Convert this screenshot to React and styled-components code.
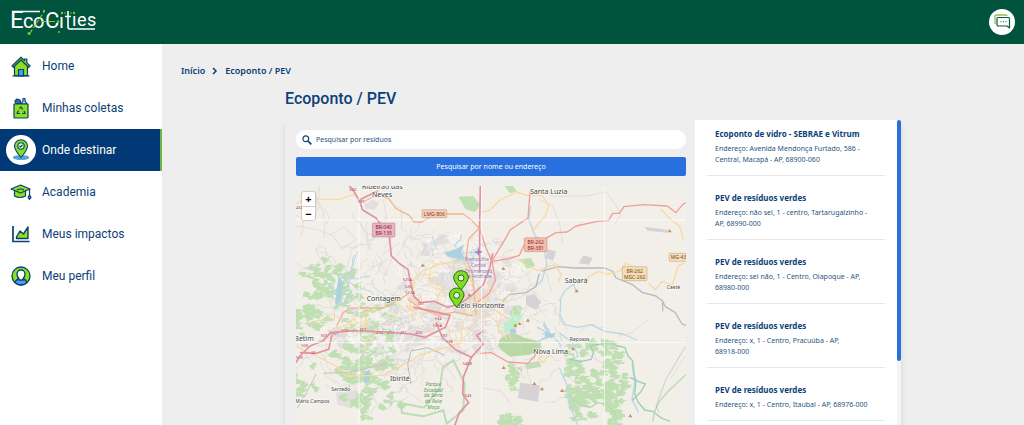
import React from 'react'
import styled, { createGlobalStyle } from 'styled-components'

const places = [
  { name: 'Ecoponto de vidro - SEBRAE e Vitrum', address: 'Avenida Mendonça Furtado, 586 - Central, Macapá - AP,', zip: '68900-060' },
  { name: 'PEV de resíduos verdes', address: 'não sei, 1 - centro, Tartarugalzinho - AP,', zip: '68990-000' },
  { name: 'PEV de resíduos verdes', address: 'sei não, 1 - Centro, Oiapoque - AP,', zip: '68980-000' },
  { name: 'PEV de resíduos verdes', address: 'x, 1 - Centro, Pracuúba - AP,', zip: '68918-000' },
  { name: 'PEV de resíduos verdes', address: 'x, 1 - Centro, Itaubal - AP,', zip: '68976-000' },
]

const menu = [
  { label: 'Home', icon: HomeIcon },
  { label: 'Minhas coletas', icon: BagIcon },
  { label: 'Onde destinar', icon: PlaceIcon, active: true },
  { label: 'Academia', icon: CapIcon },
  { label: 'Meus impactos', icon: ChartIcon },
  { label: 'Meu perfil', icon: ProfileIcon },
]

function App() {
  return (
    <Page>
      <GlobalStyle />
      <Header>
        <Logo />
        <ChatButton aria-label="Chat">
          <ChatIcon />
        </ChatButton>
      </Header>
      <Body>
        <Sidebar>
          {menu.map(({ label, icon: Icon, active }) => (
            <MenuLink href="#" key={label} $active={active}>
              <MenuIcon $active={active}><Icon /></MenuIcon>
              <span>{label}</span>
            </MenuLink>
          ))}
        </Sidebar>
        <Main>
          <Breadcrumb>
            <a href="#">Início</a>
            <svg width="6" height="8" viewBox="0 0 6 8" fill="none" stroke="#0b4078" strokeWidth="1.5">
              <path d="M1 1l3 3-3 3" />
            </svg>
            <a href="#">Ecoponto / PEV</a>
          </Breadcrumb>
          <Content>
            <Title>Ecoponto / PEV</Title>
            <Panel>
              <MapColumn>
                <SearchBox>
                  <svg width="10" height="10" viewBox="0 0 10 10" fill="none" stroke="#0b4078">
                    <circle cx="3.8" cy="3.8" r="2.9" strokeWidth="1.2" />
                    <path d="M6 6l3.3 3.3" strokeWidth="1.7" />
                  </svg>
                  <SearchInput aria-label="Pesquisar por resíduos" placeholder="Pesquisar por resíduos" />
                </SearchBox>
                <SearchButton>Pesquisar por nome ou endereço</SearchButton>
                <MapFrame>
                  <CityMap />
                  <ZoomControl>
                    <ZoomButton aria-label="Aproximar">+</ZoomButton>
                    <ZoomButton aria-label="Afastar">−</ZoomButton>
                  </ZoomControl>
                </MapFrame>
              </MapColumn>
              <PlaceList>
                {places.map((place) => (
                  <Place key={place.zip}>
                    <h2>{place.name}</h2>
                    <p>{`Endereço: ${place.address} `}<Zip>{place.zip}</Zip></p>
                  </Place>
                ))}
              </PlaceList>
              <ScrollTrack><ScrollThumb /></ScrollTrack>
            </Panel>
          </Content>
        </Main>
      </Body>
    </Page>
  )
}

export default App

function Logo() {
  return (
    <svg width="86" height="32" viewBox="0 -2 86 32" role="img" aria-label="EcoCities">
      <g fill="#fff" fontFamily="Roboto, sans-serif">
        <text x="-1" y="20" fontSize="24">E</text>
        <text x="12" y="20" fontSize="20">c</text>
        <text x="22" y="20" fontSize="20">o</text>
        <text x="34" y="20" fontSize="22">C</text>
        <text x="48" y="20" fontSize="20">ı</text>
        <text x="61" y="18" fontSize="18">ı</text>
        <text x="66" y="18" fontSize="18">e</text>
        <text x="76" y="18" fontSize="18">s</text>
      </g>
      <g fill="none" stroke="#fff" strokeWidth="1.6">
        <path d="M1 3.500h28M57 3v16q0 2 2 2h25M54 8.500h6" />
      </g>
      <g stroke="#7ccb2c" strokeWidth="1.2" fill="none">
        <path d="M19 25L33 4" strokeDasharray="4 2" />
        <path d="M30 13.500h16" strokeDasharray="6 2" />
      </g>
      <g fill="#7ccb2c">
        <circle cx="18" cy="25.500" r="1.500" />
        <circle cx="33" cy="3" r="1.200" />
        <circle cx="48" cy="24" r="1" />
        <circle cx="51" cy="5" r="1.200" />
        <circle cx="54" cy="5" r="0.800" />
        <circle cx="60" cy="5" r="0.800" />
        <circle cx="63" cy="5" r="1.200" />
        <circle cx="47" cy="13.500" r="1.200" />
      </g>
    </svg>
  )
}

function ChatIcon() {
  return (
    <svg width="18" height="16" viewBox="0 0 18 16" fill="none" strokeLinejoin="round">
      <path d="M2 10V2q0-1 1-1h10q1 0 1 1" stroke="#8cc152" strokeWidth="1.3" />
      <path d="M5 3.5h10.500q1 0 1 1V14l-2.500-2H5q-1 0-1-1V4.500q0-1 1-1z" fill="#fff" stroke="#0a5c45" strokeWidth="1.2" />
      <path d="M7.500 7.700h1M10 7.700h1M12.500 7.700h1" stroke="#0a5c45" />
    </svg>
  )
}

function HomeIcon() {
  return (
    <svg width="20" height="21" viewBox="0 0 20 21" stroke="#0b3f70" strokeWidth="1.2" strokeLinejoin="round">
      <path d="M3.500 9v10.500h13V9L10 3z" fill="#8be01e" />
      <path d="M1 10L10 1.200l3.500 3.300V3h2.300v3.700L19 10l-1.300 1.300L10 4l-7.700 7.300z" fill="#8be01e" />
      <path d="M7.500 20v-6.500h5V20z" fill="#3ba4f5" />
      <path d="M1.500 20h17" />
    </svg>
  )
}

function BagIcon() {
  return (
    <svg width="16" height="22" viewBox="0 0 16 22" stroke="#0b3f70" strokeWidth="1.2" strokeLinejoin="round">
      <path d="M3 7L2 4l2-2 3 1 1 4z" fill="#2f6eb5" />
      <path d="M8 7l2-3V1.500h2V4l2 3z" fill="#bcdcf5" />
      <path d="M1 7h14v13q0 1-1 1H2q-1 0-1-1z" fill="#8be01e" />
      <path d="M6.500 11.500L8 10l1.700 2.500M11 14l1 2.500H9M7 16.500H4l1.500-3" fill="none" />
    </svg>
  )
}

function PlaceIcon() {
  return (
    <svg width="18" height="22" viewBox="0 0 18 22" stroke="#0b3f70" strokeWidth="1.1">
      <ellipse cx="9" cy="18.500" rx="7.500" ry="1.800" fill="#4ea6ee" stroke="#4a90cc" />
      <path d="M9 18.500Q2.500 11 2.500 7a6.500 6.300 0 0 1 13 0Q15.500 11 9 18.500z" fill="#83df22" />
      <circle cx="9" cy="7" r="3.200" fill="#d9f4c6" />
      <path d="M7.500 7l1 1 2-2" fill="none" />
    </svg>
  )
}

function CapIcon() {
  return (
    <svg width="22" height="17" viewBox="0 0 22 17" stroke="#0b3f70" strokeWidth="1.2" strokeLinejoin="round">
      <path d="M4.500 6v6q5.500 3 11 0V6z" fill="#8be01e" />
      <path d="M1 5l9.500-4L20 5l-9.500 4z" fill="#8be01e" />
      <path d="M7 6q3.500-2 7 0" fill="none" />
      <path d="M19.500 5v6" />
      <path d="M19.500 11l1.500 2.500-1.500 2-1.500-2z" fill="#5c9fe0" />
    </svg>
  )
}

function ChartIcon() {
  return (
    <svg width="18" height="18" viewBox="0 0 18 18" stroke="#0b3f70" strokeWidth="1.4" strokeLinejoin="round">
      <path d="M4.500 13.500V12L8 6l3.500 3L16 2v11.500z" fill="#8be01e" />
      <path d="M1 1v15.500h16.500" fill="none" strokeWidth="1.700" />
    </svg>
  )
}

function ProfileIcon() {
  return (
    <svg width="20" height="20" viewBox="0 0 20 20" stroke="#0b3f70" strokeWidth="1.3">
      <circle cx="10" cy="10" r="9" fill="#8be01e" />
      <path d="M4 16.500q1.500-4 6-4t6 4q-2.500 2.500-6 2.500t-6-2.500z" fill="#4b9df0" />
      <path d="M8 12.500v1.500h4v-1.500q2-1.500 2-4.500a4 4 0 0 0-8 0q0 3 2 4.500z" fill="#fff" />
    </svg>
  )
}

// small repeatable generator, so the side streets stay the same between renders
function seeded(seed) {
  let s = seed
  return () => {
    s = (s * 16807) % 2147483647
    return s / 2147483647
  }
}

function streets(seed, count, cx, cy, rx, ry, step) {
  const rnd = seeded(seed)
  let d = ''
  for (let i = 0; i < count; i++) {
    const a = rnd() * 6.28
    const r = Math.sqrt(rnd())
    d += `M${Math.round(cx + Math.cos(a) * r * rx)} ${Math.round(cy + Math.sin(a) * r * ry)}`
    const turn = rnd() * 6.28
    for (let j = 0; j < 5; j++) {
      const t = turn + (rnd() - 0.5) * 1.6
      d += `l${Math.round(Math.cos(t) * step)} ${Math.round(Math.sin(t) * step)}`
    }
  }
  return d
}

function woods(seed, count, cx, cy, rx, ry, size) {
  const rnd = seeded(seed)
  let d = ''
  for (let i = 0; i < count; i++) {
    const x = cx + (rnd() + rnd() - 1) * rx
    const y = cy + (rnd() + rnd() - 1) * ry
    d += `M${Math.round(x)} ${Math.round(y)}`
    for (let j = 0; j < 9; j++) {
      const a = (j / 9) * 6.28
      const r = size * (0.3 + rnd())
      d += `L${Math.round(x + Math.cos(a) * r)} ${Math.round(y + Math.sin(a) * r * 0.7)}`
    }
    d += 'Z'
  }
  return d
}

const towns = [
  ['Ribeirão das', 198, 8, 21], ['Neves', 228, 32, 21], ['Santa Luzia', 702, 25, 21],
  ['Contagem', 212, 345, 21], ['Belo Horizonte', 480, 366, 21], ['Sabará', 806, 292, 21],
  ['Caeté', 1112, 308, 15], ['Raposos', 821, 464, 15], ['Nova Lima', 712, 505, 21],
  ['Betim', -5, 466, 21], ['Ibirité', 282, 586, 21], ['Sarzedo', 106, 615, 15], ['Mário Campos', -2, 651, 15],
]

const shields = [
  { x: 229, y: 111, w: 68, lines: ['BR-040', 'BR-135'], fill: '#e9b5bf', ink: '#7c2238' },
  { x: 378, y: 71, w: 74, lines: ['LMG-806'], fill: '#f6cfb9', ink: '#7a3a20' },
  { x: 685, y: 155, w: 68, lines: ['BR-262', 'BR-381'], fill: '#f4bdb2', ink: '#8a2c20' },
  { x: 979, y: 242, w: 74, lines: ['BR-262', 'MGC-262'], fill: '#f8deb6', ink: '#6a4a1c' },
  { x: 1119, y: 202, w: 66, lines: ['MG-435'], fill: '#f8deb6', ink: '#6a4a1c' },
]

const refs = [
  ['040', 160, 14], ['381', 186, 50], ['432', 0, 68], ['525A', 320, 285], ['526', 326, 305], ['527A', 328, 324],
  ['381', 364, 356], ['534', 416, 402], ['535A', 410, 423], ['537', 434, 452], ['538', 450, 472],
  ['497', 190, 434], ['494', 240, 443], ['492', 274, 443], ['491', 312, 443], ['490', 358, 443], ['500', 136, 437],
  ['501', 108, 446], ['503', 74, 453], ['506', 16, 482], ['44', 44, 505], ['509', 0, 518], ['5468', 500, 538], ['543', 506, 634],
]

const peaks = [
  [1121, 134], [622, 247], [842, 314], [380, 237], [658, 417], [671, 412], [696, 402], [831, 488],
  [623, 544], [715, 592], [738, 608], [798, 613], [1003, 689], [520, 326],
]

function Pin({ x, y }) {
  return (
    <g transform={`translate(${x} ${y})`} stroke="#2b6b1c" strokeWidth="3">
      <path d="M0 0Q-22 -27 -22 -37a22 21 0 0 1 44 0Q22 -27 0 0z" fill="#80dd20" />
      <circle cx="0" cy="-36" r="9" fill="#eaf6d8" />
    </g>
  )
}

function CityMap() {
  return (
    <MapSvg viewBox="0 0 1170 717" preserveAspectRatio="xMinYMin slice" role="img" aria-label="Mapa de ecopontos">
      <rect width="1170" height="717" fill="#f2efe9" />
      <g fill="#e3dfdf">
        <path d={woods(7, 60, 500, 330, 190, 190, 26)} />
        <path d={woods(17, 28, 290, 430, 190, 70, 24)} />
        <path d="M205 55l25-14 20 10-14 20-28-2zM120 620l60-8 24 34-40 20-40-10z" />
      </g>
      <path d="M672 590l60 8-6 50-60-12zM755 190l26 6-10 28-22-8zM862 208l28 8-12 20-30-4zM690 330l24-6 22 24-16 24-30-16zM1046 122l70 10-2 8-60-6z" fill="#d6d2d6" />
      <g fill="#c0dfb2">
        <path d={woods(3, 50, 105, 300, 110, 80, 17)} />
        <path d={woods(5, 80, 200, 510, 130, 200, 19)} />
        <path d={woods(8, 28, 50, 400, 60, 60, 16)} />
        <path d={woods(9, 18, 225, 590, 60, 130, 18)} />
        <path d={woods(15, 16, 650, 580, 36, 50, 14)} />
        <path d={woods(19, 18, 640, 705, 40, 28, 15)} />
        <path d={woods(29, 12, 20, 590, 50, 80, 16)} />
        <path d={woods(71, 60, 860, 590, 55, 130, 17)} />
        <path d={woods(73, 60, 950, 590, 50, 140, 17)} />
        <path d={woods(79, 12, 900, 480, 80, 24, 14)} />
        <path d="M487 32l44-2 22 26-16 22-28-8zM625 0h26l12 16-20 6zM671 220l34-4 12 24-24 8zM642 376q20-30 38-10l-10 24-24 4zM686 532l44-6 6 16-44 8z" />
      </g>
      <path d="M610 462q36-34 70-8l24 6 32 8-4 24-30 14-60 6-26-20-10-12z" fill="#b9d8a6" />
      <path d="M614 424l40-36 28-4-22 38-30 18z" fill="#bdf0c8" />
      <path d="M440 545l-8 60-48 60-70-14 4 30 64 10 60-18 10 40 50-40 4-80-34-70z" fill="none" stroke="#bcdcb2" strokeWidth="6" />
      <g fill="none" stroke="#d8d5d5" strokeWidth="2">
        <path d={streets(11, 90, 380, 350, 190, 210, 13)} />
        <path d={streets(23, 60, 600, 330, 170, 170, 12)} />
        <path d={streets(31, 60, 250, 490, 240, 150, 17)} />
        <path d={streets(37, 24, 130, 150, 220, 100, 20)} />
        <path d={streets(41, 20, 760, 500, 160, 150, 16)} />
        <path d="M0 120l60 10 50 18 30 40 40-26-34-40-46 26M262 40l10 60-50 70M730 40l40 20 20 50 10 60M760 30l110 0 60-12 30 40 14 30-20 30M1122 580l46-70M1058 400l-50 40-40 10M555 605l60 10 30 40" />
      </g>
      <g fill="none" stroke="#fff" strokeWidth="2" opacity="0.7">
        <path d={streets(43, 120, 480, 320, 200, 190, 11)} />
        <path d={streets(47, 65, 280, 430, 200, 80, 12)} />
      </g>
      <g fill="none" stroke="#b9d8e4" strokeWidth="4" strokeLinejoin="round">
        <path d="M704 60l-6 40 20 50 24 24 10 60-14 50-24 20M790 345l16-30 26-20 10 24M794 342l-2 46 14 28 40 8 40-8 40 20 56 8 40 18M790 440l40 30 16 40-30 20M790 545l22 50 16 80 20 50M1008 530l8 60-8 50 20 40" />
        <path d={streets(53, 14, 140, 310, 40, 80, 12)} strokeWidth="3" />
        <path d={streets(57, 12, 480, 200, 60, 40, 9)} strokeWidth="3" />
        <path d={streets(59, 8, 765, 450, 15, 15, 7)} />
      </g>
      <path d="M128 270l14 20-8 50-16 20 4-50zM444 200l34-10 26-14-8 24 12 20-34-4-20-6zM205 560l16-10-2 36-16 4zM747 436l18 8 14-4-10 16-22-2zM640 430l18-2 4 12-18 4z" fill="#aad3df" />
      <g fill="none" stroke="#9fcdb0" strokeWidth="4" strokeLinejoin="round">
        <path d="M886 478l60-8 20 10 20 4 10 26 14 14 4 40 6 20-4 40 10 24 20 24 24 4 26 20 26 10M1002 574l24 12 22 8-14 24-26 26M822 520l34 6 30-6 6-20-10-22" />
        <path d="M830 640l30 20 24 4 20-14 30 6 26 30M1070 706l6-30 14-30 30-34 50-46" stroke="#b4dcae" />
      </g>
      <g fill="none" stroke="#bab9be" strokeWidth="4" strokeLinejoin="round">
        <path d="M736 256l50-14 50 4 90 0 24 10 10 20 50 20 30 24 40 10 20 16v30M730 262l-10 40-30 18-50 6-20 20M1098 342l10 20 30 18 20 34 12 4" />
        <path d="M1090 680l-10-20 30-80 58-98" strokeWidth="2" />
        <path d="M345 595l-10-60 10-40 50-10 50 22" strokeWidth="3" />
      </g>
      <g fill="none" stroke="#f8d9a2" strokeWidth="4" strokeLinejoin="round">
        <path d="M0 54l30-16 50 2 50 0 40-14 20 8M552 80l30-8 30-30 50-24 30 10 46 0 20 30-10 30-40 50M666 220l30 20 30 14 50-18 20 30-10 24M868 296l10-24 30-16 24 8 38-8 20-24 20 10M1058 292l20 20 20-26 30 12 20-60 20-8M1094 70l30 30 28 22 10 40M0 480l60 30 60 30 30 30 110-2 80-40 30-20 60-18 70-20M340 375l10-90 30-30 50-20 50-10 26 10 26 70 40 50 60 40M736 480l-6 40 12 10 20-30" />
        <path d={streets(61, 32, 480, 360, 140, 130, 14)} strokeWidth="3" />
        <path d={streets(67, 14, 240, 410, 160, 60, 14)} strokeWidth="3" />
      </g>
      <path d="M82 562l80-4 60-14 50-10M60 564l-30 60-26 42" fill="none" stroke="#cbc4ba" strokeWidth="3" />
      <g fill="none" stroke="#f3b591" strokeWidth="4" strokeLinejoin="round">
        <path d="M200 48l50-24 30 16 20 28 40 20 14 20h24l40-24h84l24 18 24 26M122 420l20-40 20-14 100 0 40-20 34-22M336 340l40 28 52 20 50-10 52 12M548 128l-30 30-8 60 18 40 8 80 4 50" />
      </g>
      <g fill="none" stroke="#e2929f" strokeWidth="5" strokeLinejoin="round">
        <path d="M160 0l10 10 20 34 10 28 40 24 40 54 6 60 26 24 24 16 8 40 10 42 20 18 40-4 40 18 40-12 36-26 32-30 20-54 8-40M553 0l-2 120 0 140M186 44l60-30" />
        <path d="M0 530l12-20 30-30 40-16 22-24 70-6 90 4 80 6 44 10 60-30 14-36-60-14-50-10M420 410l20 46 40 36 46 22-24 60-2 50 18 26-28 30-18 50 12 20M526 514l36-40-20-26 20-12M12 500l50 2 36-12 10-44" />
      </g>
      <g fill="none" stroke="#f09f98" strokeWidth="4" strokeLinejoin="round">
        <path d="M548 120l22 66 18 40 50-8 32-10 14-30 50-12 46-26 34-2 26-18 64-14 34-2 12-22h20l14-20 60-6 70 4 26 20 20-24 22-14 24-26" />
        <path d="M702 16l-6 80-54 36-10 20-44 72 10 60-20 40-34 24M552 502l34-2 50 28 60 4 26-30" />
      </g>
      <g stroke="#fff" strokeWidth="3" opacity="0.75">
        <path d="M189 0v717M557 0v717M925 0v717M0 102h1170M0 470h1170" />
      </g>
      <g fill="#c98f62">
        {peaks.map(([x, y]) => <path key={`${x}-${y}`} d={`M${x} ${y - 5}l6 10h-12z`} />)}
      </g>
      <g fill="#b42c50" fontSize="12" stroke="#fff" strokeWidth="2" strokeOpacity="0.4" paintOrder="stroke">
        {refs.map(([label, x, y]) => <text key={`${x}-${y}`} x={x} y={y}>{label}</text>)}
      </g>
      {shields.map((shield) => (
        <g key={shield.x} fontSize="15" textAnchor="middle">
          <rect x={shield.x} y={shield.y} width={shield.w} height={shield.lines.length * 18 + 6} rx="3" fill={shield.fill} stroke={shield.ink} strokeOpacity="0.35" strokeWidth="2" />
          {shield.lines.map((line, i) => (
            <text key={line} x={shield.x + shield.w / 2} y={shield.y + 18 + i * 18} fill={shield.ink}>{line}</text>
          ))}
        </g>
      ))}
      <g fill="#8c7cc4" fontSize="15" textAnchor="middle">
        <path d="M547 188v20M537 198h20" stroke="#8c7cc4" strokeWidth="4" />
        <text x="547" y="226">Pampulha -</text>
        <text x="547" y="243">Carlos</text>
        <text x="547" y="260">Drummond</text>
        <text x="547" y="277">de Andrade</text>
      </g>
      <g fill="#5b9a5b" fontSize="15" fontStyle="italic" textAnchor="middle">
        <text x="412" y="600">Parque</text>
        <text x="412" y="617">Estadual</text>
        <text x="412" y="634">da Serra</text>
        <text x="412" y="651">do Rola</text>
        <text x="412" y="668">Moça</text>
      </g>
      <g fill="#444" stroke="#fff" strokeWidth="4" strokeOpacity="0.7" paintOrder="stroke">
        {towns.map(([label, x, y, size]) => <text key={label} x={x} y={y} fontSize={size}>{label}</text>)}
      </g>
      <Pin x={495} y={312} />
      <Pin x={482} y={364} />
    </MapSvg>
  )
}

const GlobalStyle = createGlobalStyle`
* { box-sizing: border-box; }
body {
  margin: 0;
  background: #eee;
  color: #0b4078;
  font-family: "Noto Sans", sans-serif;
}
a { color: inherit; text-decoration: none; }
button, input { font-family: inherit; }
`
const Page = styled.div`
height: 100vh;
display: flex;
flex-direction: column;
overflow: hidden;
`
const Header = styled.header`
flex: none;
height: 44px;
padding: 0 9px 0 11px;
display: flex;
align-items: center;
justify-content: space-between;
background: #00533d;
`
const ChatButton = styled.button`
width: 26px;
height: 26px;
padding: 0;
display: flex;
align-items: center;
justify-content: center;
border: none;
border-radius: 50%;
background: #fff;
cursor: pointer;
`
const Body = styled.div`
flex: 1;
min-height: 0;
display: flex;
`
const Sidebar = styled.nav`
flex: none;
width: 162px;
padding-top: 1px;
background: #fff;
`
const MenuLink = styled.a`
height: 42px;
padding-left: 6px;
display: flex;
align-items: center;
gap: 6px;
font-family: Roboto, sans-serif;
font-size: 12px;
color: ${(props) => (props.$active ? '#fff' : '#0b4078')};
background: ${(props) => (props.$active ? '#003975' : 'transparent')};
border-right: ${(props) => (props.$active ? '2px solid #6fb53f' : 'none')};
`
const MenuIcon = styled.span`
width: 30px;
height: 30px;
display: flex;
align-items: center;
justify-content: center;
border-radius: 50%;
background: ${(props) => (props.$active ? '#fff' : 'transparent')};
`
const Main = styled.main`
flex: 1;
min-width: 0;
padding-top: 20px;
display: flex;
flex-direction: column;
`
const Breadcrumb = styled.nav`
padding-left: 19px;
display: flex;
align-items: center;
gap: 7px;
font-size: 9px;
font-weight: 600;
line-height: 14px;
`
const Content = styled.div`
flex: 1;
min-height: 0;
margin: 0 123px;
display: flex;
flex-direction: column;
`
const Title = styled.h1`
margin: 11px 0;
font-family: Roboto, sans-serif;
font-size: 16px;
font-weight: 500;
line-height: 20px;
`
const Panel = styled.section`
flex: 1;
min-height: 0;
display: grid;
grid-template-columns: minmax(0, 1fr) 202px 4px;
box-shadow: 0 4px 6px rgba(0, 0, 0, 0.1);
`
const MapColumn = styled.div`
min-height: 0;
padding: 10px 9px 0 11px;
display: flex;
flex-direction: column;
`
const SearchBox = styled.label`
flex: none;
height: 19px;
padding: 0 6px;
display: flex;
align-items: center;
gap: 4px;
border-radius: 10px;
background: #fff;
`
const SearchInput = styled.input`
flex: 1;
min-width: 0;
padding: 0;
border: none;
outline: none;
background: transparent;
font-size: 7px;
color: #0b4078;
&::placeholder {
  color: #2a5580;
  opacity: 1;
}
`
const SearchButton = styled.button`
flex: none;
height: 19px;
margin: 8px 0 10px;
padding: 0;
border: none;
border-radius: 2px;
background: #2870de;
color: #fff;
font-size: 7px;
cursor: pointer;
`
const MapFrame = styled.div`
position: relative;
flex: 1;
min-height: 0;
overflow: hidden;
`
const MapSvg = styled.svg`
display: block;
width: 100%;
height: 100%;
`
const ZoomControl = styled.div`
position: absolute;
top: 6px;
left: 6px;
width: 13px;
border-radius: 2px;
background: #fff;
box-shadow: 0 0 1px 1px rgba(0, 0, 0, 0.15);
`
const ZoomButton = styled.button`
display: block;
width: 100%;
height: 14px;
padding: 0;
border: none;
background: transparent;
color: #000;
font-size: 11px;
font-weight: 700;
line-height: 12px;
cursor: pointer;
& + & {
  border-top: 1px solid #ccc;
}
`
const PlaceList = styled.ul`
margin: 0;
padding: 0 12px;
overflow: hidden;
list-style: none;
background: #fff;
`
const Place = styled.li`
padding: 16px 8px 10px;
border-bottom: 1px solid #e8e8e8;
&:first-child {
  padding-top: 8px;
}
h2 {
  margin: 0 0 3px;
  font-size: 8px;
  font-weight: 700;
  line-height: 12px;
}
p {
  margin: 0;
  padding-right: 4px;
  font-size: 7px;
  line-height: 11px;
  color: #2a5580;
}
`
const Zip = styled.span`
white-space: nowrap;
`
const ScrollTrack = styled.div`
background: #f4f4f4;
`
const ScrollThumb = styled.div`
height: 79%;
border-radius: 2px;
background: #2870de;
`
